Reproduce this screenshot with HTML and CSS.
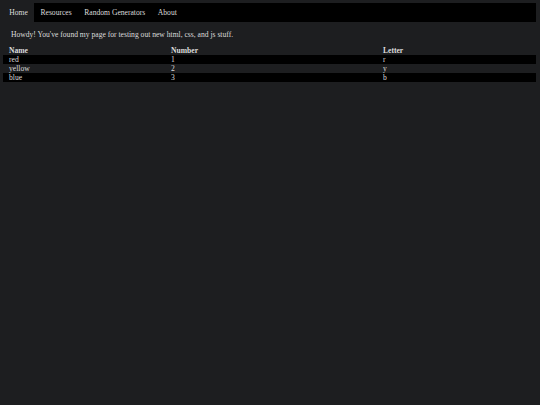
FILE: index.html
```html
<!DOCTYPE html>
<html>
<head>
<meta charset="utf-8">
<link rel="stylesheet" href="styles.css">
</head>
<body>
<nav class="nav">
  <a class="nav-item active">Home</a>
  <a class="nav-item">Resources</a>
  <a class="nav-item">Random Generators</a>
  <a class="nav-item">About</a>
</nav>
<p class="intro">Howdy! You've found my page for testing out new html, css, and js stuff.</p>
<table class="data">
  <thead>
    <tr><th class="c1">Name</th><th class="c2">Number</th><th class="c3">Letter</th></tr>
  </thead>
  <tbody>
    <tr><td>red</td><td>1</td><td>r</td></tr>
    <tr><td>yellow</td><td>2</td><td>y</td></tr>
    <tr><td>blue</td><td>3</td><td>b</td></tr>
  </tbody>
</table>
</body>
</html>
```
FILE: styles.css
```css
html, body {
  background: #1d1e20;
}
body {
  margin: 3px 4px 3px 3px;
  color: #dcdcdc;
  font-family: "Liberation Serif", "Times New Roman", serif;
  font-size: 7.6px;
}
.nav {
  display: flex;
  background: #000;
  height: 19px;
}
.nav-item {
  padding: 0 6.3px;
  line-height: 19px;
  color: #dcdcdc;
  text-decoration: none;
}
.nav-item.active {
  background: #1d1e20;
}
.intro {
  margin: 7.5px 0;
  padding-left: 8px;
  line-height: 9px;
}
.data {
  width: 100%;
  border-collapse: collapse;
  table-layout: fixed;
}
.data .c1 { width: 150px; }
.data .c2 { width: 200px; }
.data th, .data td {
  text-align: left;
  padding: 0 6px;
  height: 9px;
  line-height: 9px;
}
.data th {
  font-weight: bold;
}
.data tbody tr:nth-child(odd) {
  background: #000;
}
```
